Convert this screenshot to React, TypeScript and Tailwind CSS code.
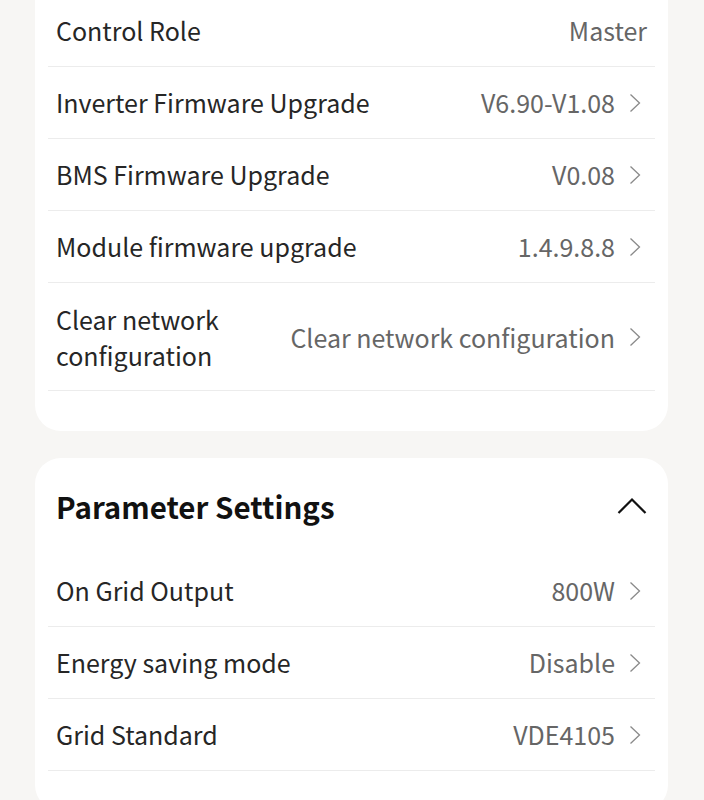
const deviceRows: [string, string, boolean][] = [
  ["Control Role", "Master", false],
  ["Inverter Firmware Upgrade", "V6.90-V1.08", true],
  ["BMS Firmware Upgrade", "V0.08", true],
  ["Module firmware upgrade", "1.4.9.8.8", true],
]

const paramRows: [string, string][] = [
  ["On Grid Output", "800W"],
  ["Energy saving mode", "Disable"],
  ["Grid Standard", "VDE4105"],
]

const Chevron = () => (
  <svg width="12" height="20" viewBox="0 0 12 20" fill="none" className="shrink-0">
    <path d="M1.5 1.5L10.5 10L1.5 18.5" stroke="#8a8a8a" strokeWidth="1.3" />
  </svg>
)

const Row = (props: { label: string; value: string; arrow?: boolean }) => (
  <div
    className={
      props.arrow
        ? "h-[72px] flex items-center justify-between border-b border-[#ececec] pl-2 pr-[14px]"
        : "h-[72px] flex items-center justify-between border-b border-[#ececec] pl-2 pr-[8px]"
    }
  >
    <span className="text-[#262626] -translate-y-px">{props.label}</span>
    <span className="flex items-center gap-[14px] text-[#666]">
      <span className="-translate-y-px">{props.value}</span>
      {props.arrow && <Chevron />}
    </span>
  </div>
)

export default function App() {
  return (
    <div
      className="min-h-[800px] bg-[#f7f6f4] overflow-hidden text-[25px] leading-9"
      style={{ fontFamily: '"Noto Sans CJK SC", "Noto Sans", sans-serif' }}
    >
      <div className="ml-[35px] mr-[36px] -mt-[25px] bg-white rounded-b-[26px] px-[13px] pb-10 pt-[20px]">
        {deviceRows.map((r) => (
          <Row key={r[0]} label={r[0]} value={r[1]} arrow={r[2]} />
        ))}
        <div className="h-[108px] flex items-center justify-between border-b border-[#ececec] pl-2 pr-[14px]">
          <span className="text-[#262626] w-[200px]">Clear network configuration</span>
          <span className="flex items-center gap-[14px] text-[#666]">
            Clear network configuration
            <Chevron />
          </span>
        </div>
      </div>

      <div className="ml-[35px] mr-[36px] mt-[27px] bg-white rounded-[26px] px-[13px] pb-10">
        <div className="h-[97px] flex items-center justify-between pl-2 pr-[8px] pb-[2px]">
          <span className="text-[29.5px] font-bold text-[#111]">Parameter Settings</span>
          <svg width="30" height="18" viewBox="0 0 30 18" fill="none">
            <path d="M1.5 16L15 2.5L28.5 16" stroke="#111" strokeWidth="2.2" />
          </svg>
        </div>
        {paramRows.map((r) => (
          <Row key={r[0]} label={r[0]} value={r[1]} arrow />
        ))}
      </div>
    </div>
  )
}
